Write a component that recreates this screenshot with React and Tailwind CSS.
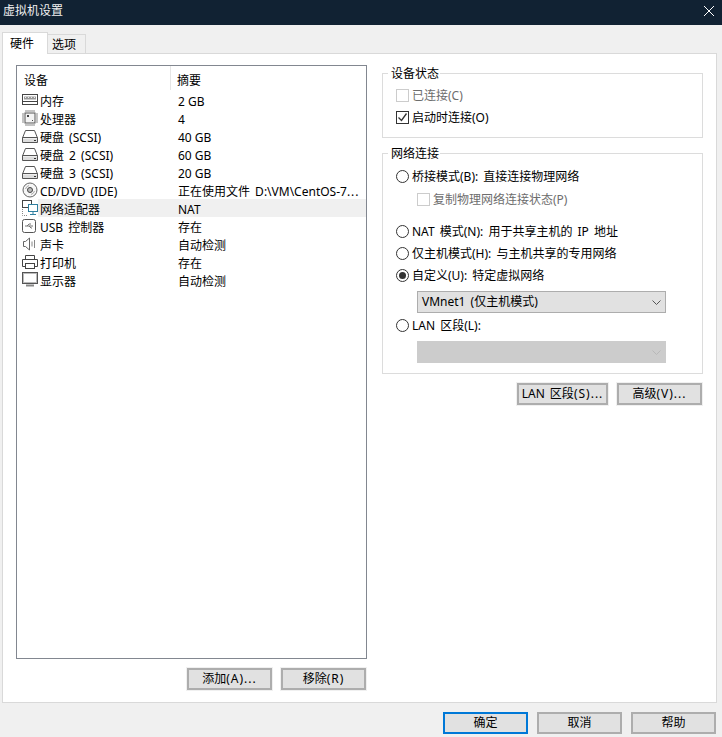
const font = '[font-family:"Noto_Sans","Noto_Sans_CJK_SC",sans-serif]';

const RamIcon = () => (
    <svg width="16" height="16" viewBox="0 0 16 16" fill="none" stroke="#444">
        <rect x=".5" y="2.5" width="15" height="10" fill="#fff" />
        <path d="M2 6h12" stroke="#999" strokeWidth="3" />
        <path d="M3 5.5h1M6 5.5h1M9 5.5h1M12 5.5h1" stroke="#eee" />
        <path d="M1 9.5h14" />
    </svg>
);

const CpuIcon = () => (
    <svg width="16" height="16" viewBox="0 0 16 16" fill="none" stroke="#444">
        <rect x="3" y="3" width="10" height="10" fill="#f4f4f4" stroke="#555" />
        <path d="M4 0v2M6 0v2M8 0v2M10 0v2M12 0v2M4 14v2M6 14v2M8 14v2M10 14v2M12 14v2M0 4h2M0 6h2M0 8h2M0 10h2M0 12h2M14 4h2M14 6h2M14 8h2M14 10h2M14 12h2" stroke="#888" />
        <path d="M5 5h2v2H5zM10 10h1v1h-1z" fill="#444" stroke="none" />
    </svg>
);

const DiskIcon = () => (
    <svg width="16" height="16" viewBox="0 0 16 16" fill="none" stroke="#555">
        <path d="M3.5 2.5h9l3 7.5v4.5H.5V10z" fill="#fff" />
        <path d="M1 10.5h14v3.5H1z" fill="#ddd" stroke="none" />
        <path d="M.5 9.5h15" />
        <path d="M12 12.5h2" stroke="#333" />
    </svg>
);

const CdIcon = () => (
    <svg width="16" height="16" viewBox="0 0 16 16" fill="none" stroke="#666">
        <circle cx="8" cy="8" r="7" fill="#f6f6f6" />
        <circle cx="8" cy="8" r="2.5" fill="#bbb" stroke="#444" />
        <path d="M3.5 7a5 5 0 0 1 3.5-3.5M12.5 9A5 5 0 0 1 9 12.5" stroke="#aaa" />
    </svg>
);

const NetIcon = () => (
    <svg width="16" height="16" viewBox="0 0 16 16" fill="none" stroke="#444">
        <rect x=".5" y=".5" width="9" height="7" />
        <rect x="6.5" y="4.5" width="9" height="7" fill="#fff" stroke="#2f7f9f" />
        <path d="M11 12v2M8 14.5h6" stroke="#2f7f9f" />
        <path d="M.5 9v6.5H6" stroke="#888" strokeDasharray="1 1" />
    </svg>
);

const UsbIcon = () => (
    <svg width="16" height="16" viewBox="0 0 16 16" fill="none" stroke="#555">
        <rect x=".5" y="1.5" width="13" height="13" rx="2" />
        <path d="M3 8h8M5 8l2-2h2M7 8l2 2h1" stroke="#777" />
    </svg>
);

const SoundIcon = () => (
    <svg width="16" height="16" viewBox="0 0 16 16" fill="none" stroke="#666">
        <path d="M1.5 5.5h2l4-3.5v12l-4-3.5h-2z" />
        <path d="M10 5.5v5M12.5 4v8" stroke="#888" />
    </svg>
);

const PrinterIcon = () => (
    <svg width="16" height="16" viewBox="0 0 16 16" fill="none" stroke="#444">
        <path d="M3.5 5V1.5h9V5" />
        <path d="M3.5 12.5h-3v-7h15v7h-3" />
        <rect x="3.5" y="9.5" width="9" height="5" />
    </svg>
);

const MonitorIcon = () => (
    <svg width="16" height="16" viewBox="0 0 16 16" fill="none" stroke="#555">
        <rect x=".5" y=".5" width="15" height="11" strokeWidth="1" />
        <rect x="1.5" y="1.5" width="13" height="9" stroke="#bbb" />
        <path d="M4 13.5h8" strokeWidth="2" stroke="#888" />
    </svg>
);

const Wide = ({ children }) => <span className="tracking-[1px]">{children}</span>;

const devices = [
    { icon: RamIcon, name: '内存', summary: '2 GB' },
    { icon: CpuIcon, name: '处理器', summary: '4' },
    { icon: DiskIcon, name: '硬盘 (SCSI)', summary: '40 GB' },
    { icon: DiskIcon, name: '硬盘 2 (SCSI)', summary: '60 GB' },
    { icon: DiskIcon, name: '硬盘 3 (SCSI)', summary: '20 GB' },
    { icon: CdIcon, name: 'CD/DVD (IDE)', summary: <span className="[word-spacing:2px]">正在使用文件 D:\VM\CentOS-7<Wide>...</Wide></span> },
    { icon: NetIcon, name: '网络适配器', summary: 'NAT', selected: true },
    { icon: UsbIcon, name: 'USB 控制器', summary: '存在' },
    { icon: SoundIcon, name: '声卡', summary: '自动检测' },
    { icon: PrinterIcon, name: '打印机', summary: '存在' },
    { icon: MonitorIcon, name: '显示器', summary: '自动检测' },
];

const DeviceRow = ({ device }) => {
    const Icon = device.icon;
    return (
        <div className="flex h-[18px] items-center">
            <span className="flex w-[21px] shrink-0 justify-end"><Icon /></span>
            <div className={`flex h-[18px] flex-1 items-center whitespace-nowrap pl-[2px] pt-[3px] ${device.selected ? 'bg-[#f0f0f0]' : ''}`}>
                <span className="w-[138px] shrink-0 [word-spacing:2px]">{device.name}</span>
                <span>{device.summary}</span>
            </div>
        </div>
    );
};

const Button = ({ children, className = '' }) => (
    <button className={`flex h-[22px] items-center justify-center border-2 border-[#adadad] bg-[#e1e1e1] text-black outline outline-1 outline-[#f0f0f0] [word-spacing:2px] ${className}`}>
        {children}
    </button>
);

const GroupBox = ({ title, className = '', children }) => (
    <fieldset className={`border border-[#dcdcdc] ${className}`}>
        <legend className="ml-[5px] h-[16px] pl-[3px] pr-[1px] leading-[18px]">{title}</legend>
        <div className="pl-[13px]">{children}</div>
    </fieldset>
);

const Radio = ({ checked, label }) => (
    <div className="flex h-[18px] items-center gap-[3px]">
        <span className="flex size-[13px] items-center justify-center rounded-full border border-[#333]">
            {checked && <span className="size-[7px] rounded-full bg-[#333]" />}
        </span>
        <span className="whitespace-nowrap pt-[2px] [word-spacing:2px]">{label}</span>
    </div>
);

const Checkbox = ({ checked, disabled, label }) => (
    <div className={`flex h-[18px] items-center gap-[3px] ${disabled ? 'text-[#6d6d6d]' : ''}`}>
        <span className={`flex size-[13px] items-center justify-center border ${disabled ? 'border-[#cccccc]' : 'border-[#333]'}`}>
            {checked && (
                <svg width="11" height="11" viewBox="0 0 11 11" fill="none" stroke="#333" strokeWidth="1.3">
                    <path d="M1.5 5.5l3 3 5-7" />
                </svg>
            )}
        </span>
        <span className="whitespace-nowrap pt-[2px]">{label}</span>
    </div>
);

const Chevron = ({ color }) => (
    <svg width="9" height="5" viewBox="0 0 9 5" fill="none" stroke={color}>
        <path d="M.5.5l4 4 4-4" />
    </svg>
);

export default function App() {
    return (
        <div className={`flex h-[737px] w-[722px] flex-col overflow-hidden bg-[#f0f0f0] text-[12px] leading-[18px] text-black ${font}`}>
            <div className="flex h-[25px] shrink-0 items-center justify-between bg-[#112233] pb-[4px] pl-[3px] pr-[8px] text-[#f0f0f0]">
                <span>虚拟机设置</span>
                <svg width="10" height="10" viewBox="0 0 10 10" stroke="#fff"><path d="M0 0l10 10M10 0L0 10" /></svg>
            </div>

            <div className="flex h-[28px] shrink-0 items-end pl-[2px]">
                <div className="relative z-10 -mb-[1px] flex h-[22px] w-[46px] items-center border border-b-0 border-[#d9d9d9] bg-white pl-[7px]">硬件</div>
                <div className="flex h-[19px] w-[38px] items-center border border-b-0 border-l-0 border-[#d9d9d9] pl-[4px] pt-[2px]">选项</div>
            </div>

            <div className="mx-[2px] flex h-[650px] w-[715px] shrink-0 flex-col border border-[#d9d9d9] bg-white">
                <div className="flex flex-1 gap-[15px] pl-[13px] pr-[13px] pt-[11px]">
                    <div className="flex w-[351px] shrink-0 flex-col">
                        <div className="h-[594px] border border-[#828790] bg-white">
                            <div className="flex h-[25px] items-start pl-[7px]">
                                <span className="flex h-[24px] w-[147px] items-center border-r border-[#e5e5e5] pt-[5px]">设备</span>
                                <span className="flex h-[24px] items-center pl-[6px] pt-[5px]">摘要</span>
                            </div>
                            {devices.map((device) => <DeviceRow key={device.name} device={device} />)}
                        </div>
                        <div className="mt-[9px] flex justify-end gap-[9px] pr-[1px]">
                            <Button className="w-[85px]">添加<Wide>(A)...</Wide></Button>
                            <Button className="w-[85px]">移除<Wide>(R)</Wide></Button>
                        </div>
                    </div>

                    <div className="flex flex-1 flex-col">
                        <GroupBox title="设备状态" className="h-[73px]">
                            <div className="mt-[5px]"><Checkbox disabled label="已连接(C)" /></div>
                            <div className="mt-[4px]"><Checkbox checked label="启动时连接(O)" /></div>
                        </GroupBox>
                        <GroupBox title="网络连接" className="mt-[7px] h-[229px]">
                            <div className="mt-[6px]"><Radio label="桥接模式(B): 直接连接物理网络" /></div>
                            <div className="ml-[21px] mt-[5px]"><Checkbox disabled label="复制物理网络连接状态(P)" /></div>
                            <div className="mt-[14px]"><Radio label="NAT 模式(N): 用于共享主机的 IP 地址" /></div>
                            <div className="mt-[4px]"><Radio label="仅主机模式(H): 与主机共享的专用网络" /></div>
                            <div className="mt-[4px]"><Radio checked label="自定义(U): 特定虚拟网络" /></div>
                            <div className="ml-[21px] mt-[7px] flex h-[22px] w-[249px] items-center justify-between border border-[#adadad] bg-[#e1e1e1] pl-[4px] pr-[4px]">
                                <span className="[word-spacing:2px]">VMnet1 (仅主机模式)</span>
                                <Chevron color="#555" />
                            </div>
                            <div className="mt-[3px]"><Radio label="LAN 区段(L):" /></div>
                            <div className="ml-[21px] mt-[7px] flex h-[22px] w-[249px] items-center justify-end border border-[#cccccc] bg-[#cccccc] pr-[4px]">
                                <Chevron color="#b8b8b8" />
                            </div>
                        </GroupBox>
                        <div className="mt-[9px] flex justify-end gap-[9px] pr-[1px]">
                            <Button className="w-[91px]">LAN 区段<Wide>(S)...</Wide></Button>
                            <Button className="w-[85px]">高级<Wide>(V)...</Wide></Button>
                        </div>
                    </div>
                </div>
            </div>

            <div className="flex flex-1 justify-end gap-[9px] pr-[6px] pt-[9px]">
                <Button className="w-[85px] !border-[#0078d7] !outline-0">确定</Button>
                <Button className="w-[85px] !outline-0">取消</Button>
                <Button className="w-[85px] !outline-0">帮助</Button>
            </div>
        </div>
    );
}
